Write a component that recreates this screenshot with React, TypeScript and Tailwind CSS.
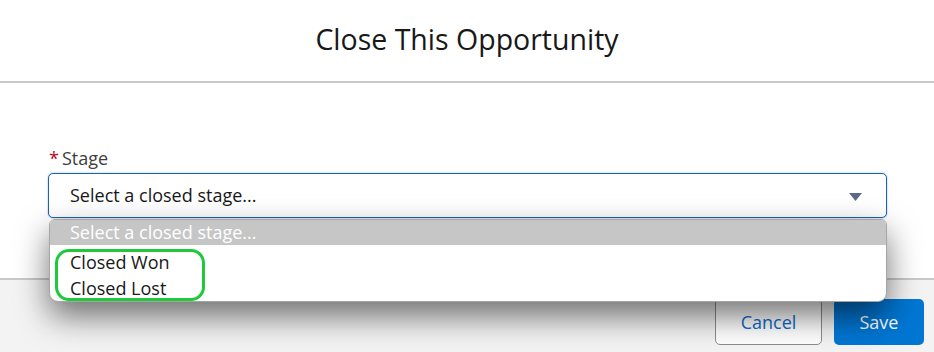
export default function App() {
  const font = { fontFamily: '"Open Sans", "Noto Sans", sans-serif' };

  return (
    <div
      className="relative flex h-[352px] w-[934px] flex-col overflow-hidden bg-white text-[#181818]"
      style={font}
    >
      {/* Header */}
      <header className="flex h-[83px] shrink-0 items-center justify-center border-b-2 border-[#c9c9c9] pb-[2px]">
        <h1 className="text-[28.5px] font-normal text-[#181818]">Close This Opportunity</h1>
      </header>

      {/* Body */}
      <div className="h-[195px] shrink-0 pl-[48px] pr-[47px] pt-[64px]">
        <label className="flex items-center text-[18px] leading-[22px] text-[#3e3e3c]">
          <span className="mr-[3px] ml-[1px] text-[#ba0517]">*</span>
          Stage
        </label>
        <div className="relative mt-[4px]">
          <div className="relative flex h-[45px] items-center rounded-[5px] border border-[#1b63b8] bg-white pl-[21px] text-[18px] shadow-[0_0_2px_#8ab4e8]">
            Select a closed stage...
            <svg
              className="absolute right-[24px] top-[19px]"
              width="13"
              height="8"
              viewBox="0 0 13 8"
            >
              <path d="M0 0h13L6.5 8z" fill="#5b6a8c" />
            </svg>
          </div>

          {/* Open dropdown */}
          <div className="absolute left-[1px] right-0 top-full z-10 mt-[1px] rounded-b-[9px] rounded-t-[6px] border border-[#a5a5a5] bg-white text-[18px] shadow-[0_14px_32px_rgba(0,0,0,0.55)]">
            <div className="flex h-[25px] items-center rounded-t-[5px] bg-[#c6c6c6] pl-[20px] text-white">
              Select a closed stage...
            </div>
            <div className="h-[4px]" />
            <div className="flex h-[26px] items-center pl-[20px]">Closed Won</div>
            <div className="flex h-[26px] items-center pl-[20px]">Closed Lost</div>
            <div className="absolute left-[5px] top-[29px] h-[52px] w-[150px] rounded-[14px] border-[3px] border-[#1ec93c]" />
          </div>
        </div>
      </div>

      {/* Footer */}
      <footer className="flex flex-1 items-start justify-end gap-[12px] border-t-2 border-[#c9c9c9] bg-[#f3f3f3] pr-[10px] pt-[19px]">
        <button className="h-[46px] w-[107px] rounded-[5px] border border-[#8c8c8c] bg-white text-[18px] text-[#0b6bcb]">
          Cancel
        </button>
        <button className="h-[46px] w-[90px] rounded-[5px] bg-[#0176d3] text-[18px] text-white">
          Save
        </button>
      </footer>
    </div>
  );
}
